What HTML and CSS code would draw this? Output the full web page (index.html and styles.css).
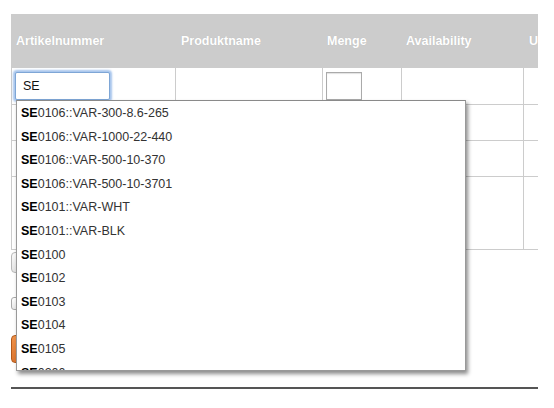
FILE: index.html
```html
<!DOCTYPE html>
<html lang="de">
<head>
<meta charset="utf-8">
<title>Bestellung</title>
<link rel="stylesheet" href="styles.css">
</head>
<body>
<div class="page">
  <div class="table-wrap">
    <div class="grid">
      <div class="th">Artikelnummer</div>
      <div class="th">Produktname</div>
      <div class="th">Menge</div>
      <div class="th">Availability</div>
      <div class="th">Unit</div>

      <div class="td first r1"><input class="sku" type="text" value="SE"></div>
      <div class="td r1"></div>
      <div class="td r1"><input class="qty" type="text" value=""></div>
      <div class="td r1"></div>
      <div class="td r1"></div>

      <div class="td first r2"></div>
      <div class="td r2"></div>
      <div class="td r2"></div>
      <div class="td r2"></div>
      <div class="td r2"></div>

      <div class="td first r2"></div>
      <div class="td r2"></div>
      <div class="td r2"></div>
      <div class="td r2"></div>
      <div class="td r2"></div>

      <div class="td first r4"></div>
      <div class="td r4"></div>
      <div class="td r4"></div>
      <div class="td r4"></div>
      <div class="td r4"></div>
    </div>
  </div>

  <div class="actions">
    <button class="btn-light" type="button" aria-label="Zeile hinzufügen"></button>
    <span class="checkbox" role="checkbox" aria-checked="false" aria-label="Bestätigen"></span>
    <button class="btn-orange" type="button" aria-label="In den Warenkorb"></button>
  </div>
  <div class="rule"></div>

  <ul class="suggest">
    <li><b>SE</b>0106::VAR-300-8.6-265</li>
    <li><b>SE</b>0106::VAR-1000-22-440</li>
    <li><b>SE</b>0106::VAR-500-10-370</li>
    <li><b>SE</b>0106::VAR-500-10-3701</li>
    <li><b>SE</b>0101::VAR-WHT</li>
    <li><b>SE</b>0101::VAR-BLK</li>
    <li><b>SE</b>0100</li>
    <li><b>SE</b>0102</li>
    <li><b>SE</b>0103</li>
    <li><b>SE</b>0104</li>
    <li><b>SE</b>0105</li>
    <li><b>SE</b>0200</li>
    <li><b>SE</b>0201</li>
  </ul>
</div>
</body>
</html>
```

FILE: styles.css
```css
* { box-sizing: border-box; }

html, body {
  margin: 0;
  padding: 0;
  background: #ffffff;
}

body {
  font-family: "Liberation Sans", Arial, Helvetica, sans-serif;
  font-size: 12.5px;
  color: #333333;
}

.page {
  position: relative;
  padding: 14px 0 0 11px;
  width: 554px;
  height: 408px;
  overflow: hidden;
}

.table-wrap {
  width: 527px;
  overflow: hidden;
}

.grid {
  display: grid;
  grid-template-columns: 165px 147px 79px 122px 100px;
  grid-template-rows: 54px 37px 36px 36px 73px;
  width: 613px;
}

.th {
  background: #cccccc;
  color: #ffffff;
  font-weight: bold;
  padding: 0 0 0 5px;
  display: flex;
  align-items: center;
  text-shadow: 0 0 1px rgba(0, 0, 0, 0.12);
  white-space: nowrap;
}

.th:nth-child(2) { padding-left: 5px; }
.th:nth-child(3) { padding-left: 4px; }
.th:nth-child(4) { padding-left: 4px; }
.th:nth-child(5) { padding-left: 5px; }

.td {
  border-right: 1px solid #cccccc;
  border-bottom: 1px solid #cccccc;
  padding: 4px 0 0 3px;
}

.td.first {
  border-left: 1px solid #cccccc;
}

.sku {
  display: block;
  width: 95px;
  height: 28px;
  margin: 0;
  padding: 0 0 0 7px;
  border: 1px solid #7ea6d6;
  border-radius: 2px;
  box-shadow: 0 0 2px 2px rgba(95, 150, 220, 0.55);
  font-family: "Liberation Sans", Arial, Helvetica, sans-serif;
  font-size: 12.5px;
  color: #111111;
  outline: none;
  background: #ffffff;
}

.qty {
  display: block;
  width: 36px;
  height: 28px;
  margin: 0;
  padding: 0;
  border: 1px solid #aaaaaa;
  box-shadow: inset 0 1px 1px rgba(0, 0, 0, 0.12);
  background: #ffffff;
  outline: none;
}

.actions {
  display: flex;
  flex-direction: column;
  align-items: flex-start;
}

.btn-light {
  margin: 2px 0 0 0;
  height: 21px;
  width: 130px;
  border: 1px solid #b8b8b8;
  border-radius: 4px;
  background: linear-gradient(#fbfbfb, #e4e4e4);
  padding: 0;
}

.checkbox {
  margin-top: 24px;
  display: block;
  width: 13px;
  height: 13px;
  border: 1px solid #a9a9a9;
  border-radius: 3px;
  background: linear-gradient(#ffffff, #e8e8e8);
}

.btn-orange {
  margin-top: 25px;
  height: 28px;
  width: 150px;
  border: 1px solid #b25a1c;
  border-radius: 4px;
  background: linear-gradient(#f0924a, #dc7630);
  padding: 0;
}

.rule {
  margin-top: 24px;
  width: 527px;
  height: 2px;
  background: #555555;
}

.suggest {
  position: absolute;
  left: 16px;
  top: 100px;
  width: 450px;
  height: 271px;
  margin: 0;
  padding: 0;
  list-style: none;
  background: #ffffff;
  border: 1px solid #999999;
  border-top-color: #8a8a8a;
  box-shadow: 2px 3px 4px rgba(0, 0, 0, 0.45);
  overflow: hidden;
}

.suggest li {
  height: 23.6px;
  line-height: 24.4px;
  padding-left: 4px;
  color: #333333;
  white-space: nowrap;
}

.suggest b {
  color: #000000;
  font-weight: bold;
}
```
